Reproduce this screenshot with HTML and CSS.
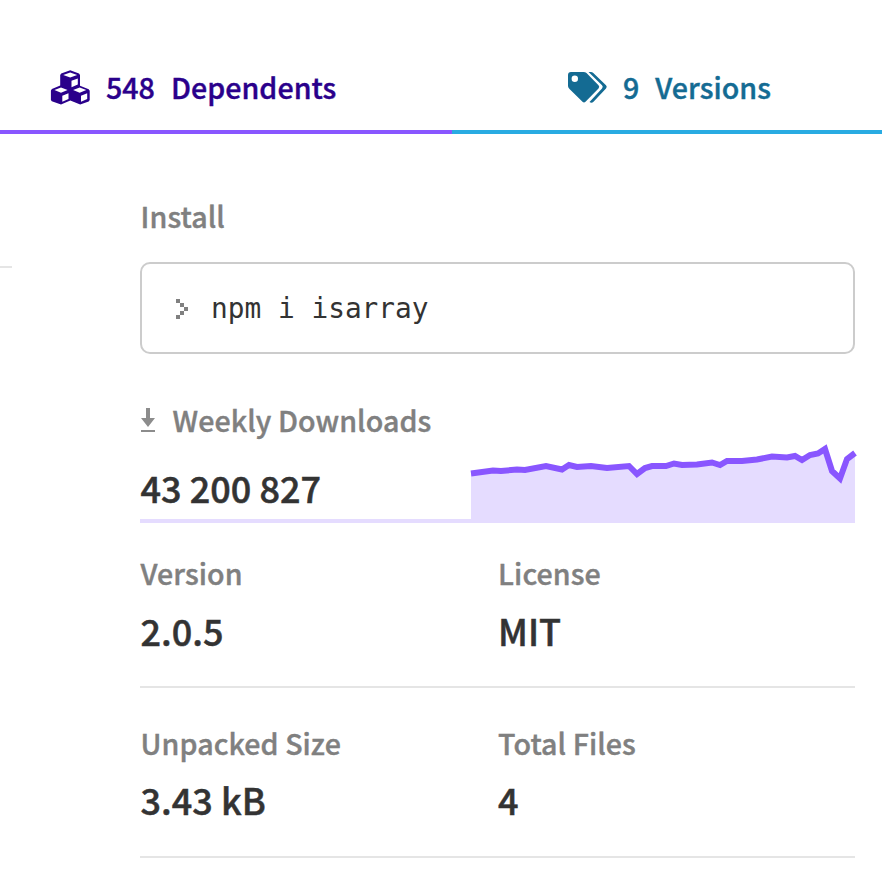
FILE: index.html
```html
<!DOCTYPE html>
<html lang="en">
<head>
<meta charset="utf-8">
<title>isarray</title>
<link rel="stylesheet" href="styles.css">
</head>
<body>
<nav class="tabs">
  <a class="tab dependents">
    <svg class="tab-icon" width="40" height="36" viewBox="0 0 40 36">
      <path class="solid" d="M20.200.200 29 3.400 30 5v10.800l8.700 3.400 1 1.500V30l-1 1.500-8.500 3-9.900-4-9.300 4-9.200-3.300L.900 30V20.500l1-1.500 8.300-3.400V5l1-1.500Z"/>
      <path class="cut" d="m20.200 2.600 7 2.400-7 2.600-7-2.600ZM21.500 10.800l6.300-2.400v6.200l-6.300 2.700ZM11 17.600l6.600 2.400-6.600 2.700L4.400 20ZM12.300 25.700l6.200-2.500v5.900l-6.200 2.700ZM29.700 17.600l6.600 2.400-6.600 2.700-6.600-2.700ZM31 25.700l6.200-2.500v5.900l-6.200 2.700Z"/>
    </svg>
    <span class="count">548</span><span class="name">Dependents</span>
  </a>
  <a class="tab versions">
    <svg class="tab-icon" width="40" height="36" viewBox="0 0 40 36">
      <path class="solid" fill-rule="evenodd" d="M3 2h12.500q1.800 0 3 1L30.500 15.200q1.500 1.600 0 3.200L17.500 31.800q-1.500 1.400-3 0L1.500 19Q0 17.500 0 16V5q0-3 3-3ZM6.800 5.500a3.200 3.200 0 1 0 0 6.400 3.200 3.200 0 0 0 0-6.400Z"/>
      <path class="solid" d="M20.500 2h2.300q1.500 0 2.500 1L38 15.200q1.500 1.600 0 3.200L25.500 31.800q-1.800 1.500-4 .3L34 18.500q1.500-1.600 0-3.200Z"/>
    </svg>
    <span class="count">9</span><span class="name">Versions</span>
  </a>
</nav>
<div class="page">
  <div class="readme"></div>
  <aside class="sidebar">
    <h3 class="label install-label">Install</h3>
    <div class="command">
      <svg class="prompt" width="13" height="20" viewBox="0 0 13 20"><path d="M0 0h4v4H0ZM4 4h4v4H4ZM8 8h4v4H8ZM4 12h4v4H4ZM0 16h4v4H0Z"/></svg>
      <code>npm i isarray</code>
    </div>
    <h3 class="label downloads-label">
      <svg class="down" width="16" height="25" viewBox="0 0 16 25"><path d="M6 0h4v10h5L8 19 1 10h5ZM1 22h14v2H1Z"/></svg>
      <span>Weekly Downloads</span>
    </h3>
    <div class="downloads">
      <p class="value total">43 200 827</p>
      <svg class="chart" width="384" height="80" viewBox="0 0 384 80">
        <path class="area" d="M0 30.500 22 27.500 30 28 46 26.500 54 27 75 23 91 26 98 22 106 24 120 23 136 25 158 23 166 31 174 25 181 23 195 23 203 20.500 211 22 226 21.500 241 19.500 249 22 256 18 271 18 286 16.500 301 13.500 316 14.500 324 13 331 17 339 12 347 10.500 354 6 361 28 369 35 376 16 384 10V80H0Z"/>
        <path class="line" d="M0 30.500 22 27.500 30 28 46 26.500 54 27 75 23 91 26.500 98 22 106 24 120 23 136 25 158 23 166 31 174 25 181 23 195 23 203 20.500 211 22 226 21.500 241 19.500 249 22 256 18 271 18 286 16.500 301 13.500 316 14.500 324 13 331 17 339 12 347 10.500 354 6 361 28 369 35.500 376 16 384 10"/>
      </svg>
    </div>
    <dl class="facts">
      <div class="fact"><dt class="label">Version</dt><dd class="value">2.0.5</dd></div>
      <div class="fact"><dt class="label">License</dt><dd class="value">MIT</dd></div>
    </dl>
    <dl class="facts second">
      <div class="fact"><dt class="label">Unpacked Size</dt><dd class="value">3.43 kB</dd></div>
      <div class="fact"><dt class="label">Total Files</dt><dd class="value">4</dd></div>
    </dl>
  </aside>
</div>
</body>
</html>
```

FILE: styles.css
```css
* { box-sizing: border-box; margin: 0; padding: 0; }
body { background: #fff; font-family: "Noto Sans CJK SC", sans-serif; font-weight: 500; overflow: hidden; }
.tabs { display: flex; height: 134px; }
.tab { display: flex; align-items: flex-start; padding-top: 70px; border-bottom: 4px solid; font-size: 28.6px; line-height: 34px; white-space: pre; -webkit-text-stroke: 0.4px currentColor; }
.dependents { width: 452px; padding-left: 50px; border-color: #8956ff; color: #2a008b; }
.versions { flex: 1; padding-left: 116px; border-color: #29abe2; color: #146b93; }
.tab-icon { flex: none; margin-right: 16px; }
.versions .tab-icon { margin-right: 15px; }
.solid { fill: currentColor; }
.cut { fill: #fff; }
.count { margin-right: 16px; }
.name { letter-spacing: 0.05px; }
.page { display: flex; height: 744px; }
.readme { width: 12px; height: 134px; border-bottom: 2px solid #e5e5e5; }
.sidebar { width: 715px; margin-left: 128px; padding-top: 64px; }
.label { color: #808080; font-size: 28.6px; line-height: 36px; font-weight: 500; letter-spacing: 0.06px; white-space: nowrap; text-indent: 0.6px; -webkit-text-stroke: 0.4px currentColor; }
.value { color: #333; font-size: 36px; line-height: 48px; font-weight: 500; letter-spacing: 0.03px; white-space: nowrap; text-indent: 0.5px; -webkit-text-stroke: 0.5px currentColor; }
.command { display: flex; align-items: center; height: 92px; margin-top: 28px; padding-left: 33px; border: 2px solid #ccc; border-radius: 10px; }
.prompt { fill: #808080; margin: 2px 22px 0 1px; }
code { padding-top: 2px; font: 27.8px/40px "DejaVu Sans Mono", monospace; color: #333; white-space: pre; }
.downloads-label { display: flex; align-items: center; margin-top: 48px; }
.down { fill: #8c8c8c; margin-right: 16px; }
.downloads { display: flex; justify-content: space-between; height: 85px; }
.total { flex: 1; padding-top: 25px; border-bottom: 4px solid #e5dcff; }
.chart { margin-top: 5px; overflow: visible; }
.area { fill: #e5dcff; }
.line { fill: none; stroke: #8956ff; stroke-width: 6; }
.facts { display: flex; height: 165px; padding-top: 32px; border-bottom: 2px solid #e5e5e5; }
.facts.second { height: 170px; padding-top: 37px; }
.fact { flex: 1; }
.fact .value { margin-top: 15px; }
.second .value { margin-top: 14px; }
```
